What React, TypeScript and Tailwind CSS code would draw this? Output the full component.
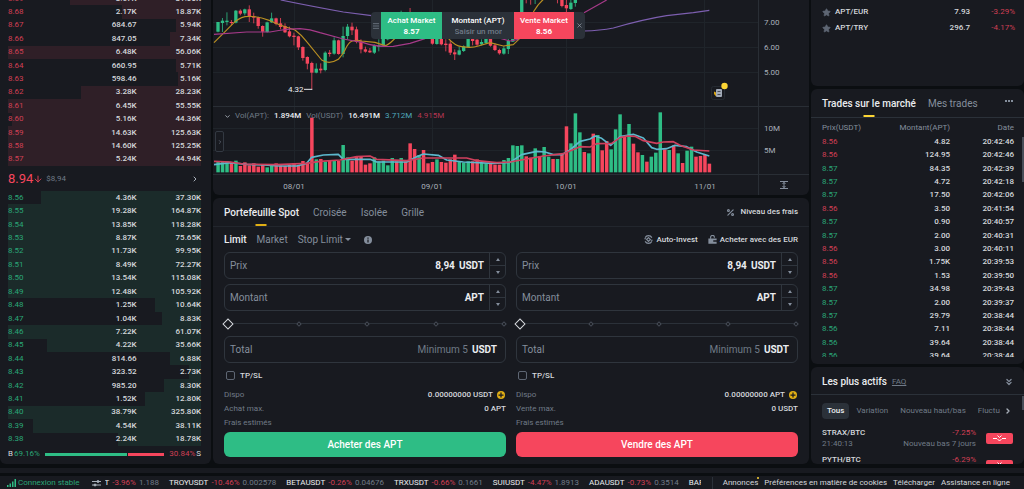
import { useState } from "react";
import { ArrowDown, ChevronDown, ChevronRight, ChevronsDown, Menu, Percent, Star, X } from "lucide-react";

const ASKS: [string, string, string, number][] = [
  ["8.69", "3.57K", "31.00K", 68],
  ["8.68", "2.17K", "18.87K", 41],
  ["8.67", "684.67", "5.94K", 13],
  ["8.66", "847.05", "7.34K", 16],
  ["8.65", "6.48K", "56.06K", 100],
  ["8.64", "660.95", "5.71K", 13],
  ["8.63", "598.46", "5.16K", 12],
  ["8.62", "3.28K", "28.23K", 62],
  ["8.61", "6.45K", "55.55K", 100],
  ["8.60", "5.16K", "44.36K", 98],
  ["8.59", "14.63K", "125.63K", 100],
  ["8.58", "14.60K", "125.25K", 100],
  ["8.57", "5.24K", "44.94K", 100],
];

const BIDS: [string, string, string, number][] = [
  ["8.56", "4.36K", "37.30K", 83],
  ["8.55", "19.28K", "164.87K", 100],
  ["8.54", "13.85K", "118.28K", 100],
  ["8.53", "8.87K", "75.65K", 100],
  ["8.52", "11.73K", "99.95K", 100],
  ["8.51", "8.49K", "72.27K", 100],
  ["8.50", "13.54K", "115.08K", 100],
  ["8.49", "12.48K", "105.92K", 100],
  ["8.48", "1.25K", "10.64K", 24],
  ["8.47", "1.04K", "8.83K", 20],
  ["8.46", "7.22K", "61.07K", 100],
  ["8.45", "4.22K", "35.66K", 80],
  ["8.44", "814.66", "6.88K", 16],
  ["8.43", "323.52", "2.73K", 6],
  ["8.42", "985.20", "8.30K", 19],
  ["8.41", "1.52K", "12.80K", 29],
  ["8.40", "38.79K", "325.80K", 100],
  ["8.39", "4.54K", "38.11K", 87],
  ["8.38", "2.24K", "18.78K", 43],
];

// price, amount, time, bought
const TRADES: [string, string, string, boolean][] = [
  ["8.56", "4.82", "20:42:46", false],
  ["8.56", "124.95", "20:42:46", false],
  ["8.57", "84.35", "20:42:39", true],
  ["8.57", "4.72", "20:42:18", true],
  ["8.57", "17.50", "20:42:06", true],
  ["8.56", "3.50", "20:41:54", false],
  ["8.57", "0.90", "20:40:57", true],
  ["8.57", "2.00", "20:40:31", true],
  ["8.56", "3.00", "20:40:11", false],
  ["8.56", "1.75K", "20:39:53", false],
  ["8.56", "1.53", "20:39:50", false],
  ["8.57", "34.98", "20:39:43", true],
  ["8.57", "2.00", "20:39:37", true],
  ["8.57", "29.79", "20:38:44", true],
  ["8.56", "7.11", "20:38:44", true],
  ["8.56", "39.64", "20:38:44", true],
  ["8.56", "39.64", "20:38:44", true],
];

const TICKERS = [
  ["T", "-3.96%", "1.188"],
  ["TROYUSDT", "-10.46%", "0.002578"],
  ["BETAUSDT", "-0.26%", "0.04676"],
  ["TRXUSDT", "-0.66%", "0.1661"],
  ["SUIUSDT", "-4.47%", "1.8913"],
  ["ADAUSDT", "-0.73%", "0.3514"],
  ["BAR"],
];

const GREEN = "#2ebd85";
const RED = "#f6465d";

// index, rising, body top, body bottom, high, low (thirds of a pixel)
const CANDLES: [number, 0 | 1, number, number, number, number][] = [
  [0, 1, 66, 95, 66, 97], [1, 1, 62, 69, 54, 96], [2, 1, 62, 66, 37, 76], [3, 0, 66, 69, 60, 76],
  [4, 1, 32, 68, 30, 70], [5, 0, 32, 41, 28, 46], [6, 1, 28, 40, 26, 46], [7, 0, 28, 50, 16, 66],
  [8, 0, 49, 53, 38, 70], [9, 0, 52, 78, 50, 86], [10, 0, 78, 95, 76, 110], [11, 1, 67, 96, 65, 98],
  [12, 1, 55, 67, 38, 69], [13, 0, 55, 72, 53, 76], [14, 0, 70, 81, 54, 88], [15, 0, 78, 97, 70, 99],
  [16, 0, 94, 109, 80, 112], [17, 0, 107, 111, 98, 136], [18, 0, 109, 142, 107, 150],
  [19, 0, 141, 174, 139, 182], [20, 0, 171, 191, 169, 208], [21, 0, 189, 218, 185, 268],
  [22, 1, 206, 218, 190, 220], [23, 0, 206, 211, 190, 220], [24, 1, 158, 210, 154, 214],
  [25, 0, 158, 162, 150, 170], [26, 1, 121, 161, 112, 164], [27, 0, 121, 162, 119, 164],
  [28, 1, 108, 162, 80, 172], [29, 1, 80, 108, 72, 118], [30, 0, 80, 91, 68, 105],
  [31, 0, 88, 126, 80, 130], [32, 0, 124, 148, 118, 160], [33, 0, 148, 155, 140, 158],
  [34, 0, 152, 157, 144, 159], [35, 1, 137, 158, 133, 162], [36, 1, 136, 140, 118, 154],
  [37, 1, 110, 137, 100, 138], [38, 1, 90, 118, 80, 121], [41, 1, 45, 60, 32, 70], [43, 0, 45, 60, 24, 70],
  [48, 0, 100, 131, 95, 134], [49, 1, 110, 132, 100, 134], [50, 0, 110, 133, 100, 136],
  [51, 0, 131, 135, 118, 154], [52, 0, 131, 158, 120, 165], [53, 0, 157, 163, 148, 180],
  [54, 1, 151, 164, 140, 166], [55, 1, 139, 153, 136, 156], [56, 1, 110, 141, 100, 142],
  [57, 0, 110, 123, 100, 136], [58, 0, 119, 134, 110, 138], [59, 1, 126, 133, 118, 136],
  [60, 1, 112, 129, 105, 131], [61, 0, 112, 137, 105, 140], [62, 0, 136, 150, 130, 153],
  [63, 0, 150, 160, 146, 164], [64, 1, 145, 161, 138, 164], [65, 1, 123, 147, 115, 162],
  [66, 1, 100, 125, 95, 126], [68, 1, -10, 37, -20, 40], [69, 0, -20, -10, -20, 10],
  [70, 0, -20, -10, -20, 14], [71, 1, -20, -10, -20, 12], [76, 0, -20, -10, -20, 10],
  [77, 0, -10, 18, -20, 22], [78, 0, 15, 25, -5, 38], [79, 1, 8, 27, 0, 30], [80, 1, -10, 9, -20, 20],
];

// bar heights in thirds of a pixel, negative for falling days
const VOLUMES = [
  31, 33, 33, -31, 35, -19, -30, -21, -27, -17, -24, 15, 22, -27, -21, -19, -22, -28, -22, -34, -29, -164,
  39, -40, 32, -34, 37, -34, 82, 45, -35, -49, -47, -23, -27, 45, 33, 35, 21, 43, -33, 43, -33, -87,
  -70, 52, -67, -27, -31, 39, -31, -29, -39, -53, 33, 29, 33, -33, -39, 29, 27, -25, -23, -23, 37, 43,
  81, 79, 81, -48, -44, 72, -49, 76, 47, -40, 40, -54, -138, 87, 177, 120, -61, 57, -116, 112, -66, -94,
  69, 129, 174, -107, 145, -86, -60, 52, -32, 47, 59, 180, -69, 67, -81, 57, -28, 65, 77, -47, -49, -52, -26,
];

const barX = (i: number) => 24 + i * 13.4;

function Chart() {
  return (
    <svg viewBox="0 0 596 195" preserveAspectRatio="xMaxYMin meet" className="block h-full w-full">
      <g stroke="#1f242a" strokeWidth="1" shapeRendering="crispEdges">
        <path d="M0 22.5H545M0 47.5H545M0 72.5H545M0 128.5H545M0 150.5H545M81.5 0V174M219.5 0V174M353.5 0V174M491.5 0V174" />
        <path d="M0 106.5H596M0 174.5H596M545.5 0V195" stroke="#292e35" />
      </g>
      <g transform="translate(-3 0) scale(.33333)">
        {CANDLES.map(([i, up, top, bottom, high, low]) => (
          <g key={i} fill={up ? GREEN : RED}>
            <rect x={barX(i) - 1.5} y={high} width="3" height={low - high} opacity=".8" />
            <rect x={barX(i) - 5} y={top} width="10" height={Math.max(bottom - top, 3)} />
          </g>
        ))}
        {VOLUMES.map((v, i) => (
          <rect key={i} x={barX(i) - 5} y={517 - Math.abs(v)} width="10.5" height={Math.abs(v)} fill={v > 0 ? GREEN : RED} />
        ))}
        <g fill="none" strokeWidth="3" strokeLinejoin="round">
          <path stroke="#b98f22" strokeWidth="3.5" d="M12 128L40 100L75 65Q95 49 115 49Q145 48 180 62L210 75L255 90Q275 105 290 125L335 180Q358 195 385 178Q400 160 405 150Q415 128 425 124Q440 118 455 123L495 127L525 137Q535 135 550 120L590 80M690 90L712 112Q735 138 755 140Q785 145 805 138L840 128L880 138L910 134L935 110M970 36Q985 10 1003 -4" />
          <path stroke="#a63a89" strokeWidth="3.5" d="M12 103L110 96L180 96Q235 86 270 86Q300 88 330 98L400 117L460 128Q500 142 550 139L600 130L645 116M860 112L900 123L925 118M1122 38L1190 0" />
          <path stroke="#7d5fb0" strokeWidth="3.5" d="M212 0Q320 22 400 36L485 47M1122 93Q1170 92 1210 84Q1300 58 1370 47L1450 38L1498 31" />
          <path stroke="#5cb8cd" strokeWidth="5" d="M12 494L60 488L110 493L160 495L210 498L260 498L290 490L305 472L340 465L385 463L400 478L480 478L500 486L590 486L620 470L640 462L685 466L710 480L760 486L850 490L900 487L935 464L980 454L1005 456L1030 464L1055 464L1080 450L1110 424L1140 417L1155 408L1175 415L1202 436L1230 410L1270 403L1300 414L1325 443L1340 448L1370 446L1395 436L1430 440L1460 456L1498 468" />
          <path stroke="#cf405d" strokeWidth="5" d="M12 484L60 486L100 492L200 494L290 490L330 484L390 480L440 470L480 468L500 478L590 482L640 474L770 474L800 482L860 488L900 486L1000 468L1060 461L1110 440L1140 441L1160 431L1205 430L1230 413L1250 408L1275 409L1300 422L1340 430L1360 426L1390 425L1410 436L1450 450L1498 453" />
        </g>
        <path d="M282 268H307" stroke="#eaecef" strokeWidth="3" />
      </g>
      <g fill="#a9b0ba" fontSize="8">
        <text x="75" y="92" fill="#eaecef">4.32</text>
        <text x="551" y="25">7.00</text>
        <text x="551" y="50">6.00</text>
        <text x="551" y="75">5.00</text>
        <text x="551" y="131">10M</text>
        <text x="551" y="153">5M</text>
        <g textAnchor="middle">
          <text x="81" y="189">08/01</text>
          <text x="219" y="189">09/01</text>
          <text x="353" y="189">10/01</text>
          <text x="492" y="189">11/01</text>
        </g>
      </g>
      <path d="M567 181.5H575M567 188.5H575M571 182V188M569.5 184L571 182.5L572.5 184M569.5 186L571 187.5L572.5 186" stroke="#848e9c" fill="none" />
      <rect x="498.5" y="86.5" width="13" height="13" rx="2" fill="#181a20" stroke="#252a31" />
      <path d="M501 91.5L503 92.5V96.5L501 94Z" fill="#d9a514" />
      <rect x="503" y="89" width="6" height="8" rx="1" fill="#a3abb8" />
      <path d="M504.5 91.5H507.5M504.5 94.5H507.5" stroke="#474d57" />
      <circle cx="511.5" cy="86" r="3.2" fill="#fcd535" />
    </svg>
  );
}

function QuickOrder() {
  return (
    <div className="absolute left-[158px] top-3 flex h-[27px] overflow-hidden rounded-sm bg-[#2b3139] text-[8px] font-medium leading-[11px] text-white">
      <div className="flex w-[10px] items-center justify-center text-[#848e9c]"><Menu size={8} /></div>
      <button className="w-[61px] bg-[#2ebd85]">Achat Market<br /><b>8.57</b></button>
      <label className="flex w-[72px] flex-col items-center justify-center">
        Montant (APT)
        <input placeholder="Saisir un montant" className="w-[47px] bg-transparent placeholder:text-[#707a87] outline-none" />
      </label>
      <button className="w-[60px] bg-[#f6465d]">Vente Market<br /><b>8.56</b></button>
      <button aria-label="Fermer" className="flex w-[11px] items-center justify-center text-[#a9b0ba]"><X size={7} /></button>
    </div>
  );
}

function BookTable({ rows, side }: { rows: [string, string, string, number][]; side: "ask" | "bid" }) {
  return (
    <table className={"block px-2 font-medium " + (side === "ask" ? "h-[174px] shrink-0" : "min-h-0 flex-1")}>
      <tbody className="flex h-full flex-col">
        {rows.map(([price, amount, total, depth]) => (
          <tr key={price} className="relative grid flex-1 grid-cols-3 items-center text-right">
            <td className={"text-left font-normal " + (side === "ask" ? "text-[#d03f54]" : "text-[#2aa677]")}>
              <span
                className={"absolute inset-y-0 right-0 " + (side === "ask" ? "bg-[#2f1f27]" : "bg-[#1b2b2a]")}
                style={{ width: `${depth}%` }}
              />
              <span className="relative">{price}</span>
            </td>
            <td className="relative">{amount}</td>
            <td className="relative">{total}</td>
          </tr>
        ))}
      </tbody>
    </table>
  );
}

function OrderBook() {
  return (
    <section className="flex w-[211px] shrink-0 flex-col rounded-b-md bg-[#181a20] pr-[2px]">
      <div className="flex h-[166px] flex-col justify-end overflow-hidden">
        <BookTable rows={ASKS} side="ask" />
      </div>
      <div className="flex h-[25px] items-center px-2">
        <span className="text-[13px] text-[#f6465d]">8.94</span>
        <ArrowDown size={10} className="text-[#f6465d]" />
        <span className="ml-[3px] text-[#707a87]">$8,94</span>
        <ChevronRight size={8} strokeWidth={3} className="ml-auto mr-[2px] text-[#a9b0ba]" />
      </div>
      <BookTable rows={BIDS} side="bid" />
      <div className="flex h-[18px] items-center px-2 pb-[2px]">
        <span>B</span>
        <span className="ml-px text-[#2aa677]">69.16%</span>
        <div className="mx-[5px] flex flex-1 gap-px">
          <span className="h-[3px] grow-[69] bg-[#2ebd85]" />
          <span className="h-[3px] grow-[31] bg-[#f6465d]" />
        </div>
        <span className="text-[#d03f54]">30.84%</span>
        <span className="ml-px">S</span>
      </div>
    </section>
  );
}

function Spinner() {
  return (
    <div className="flex h-full w-4 flex-col divide-y divide-[#2f353d] border-l border-[#2f353d]">
      <button aria-label="Augmenter" className="flex flex-1 items-center justify-center">
        <span className="border-x-2 border-b-[3px] border-x-transparent border-b-[#848e9c]" />
      </button>
      <button aria-label="Diminuer" className="flex flex-1 items-center justify-center">
        <span className="border-x-2 border-t-[3px] border-x-transparent border-t-[#848e9c]" />
      </button>
    </div>
  );
}

function Field({ label, unit, value, placeholder, stepper }: { label: string; unit: string; value?: string; placeholder?: string; stepper?: boolean }) {
  return (
    <div className="flex h-[27px] items-center overflow-hidden rounded-md border border-[#2f353d] text-[10px]">
      <label className="flex min-w-0 flex-1 items-center pl-[5px] text-[#848e9c]">
        {label}
        <input
          defaultValue={value}
          placeholder={placeholder}
          className="min-w-0 flex-1 bg-transparent text-right font-bold text-[#eaecef] outline-none placeholder:font-normal placeholder:text-[#707a87]"
        />
      </label>
      <span className={"pl-1 font-bold text-[#eaecef] " + (stepper ? "pr-[5px]" : "pr-2")}>{unit}</span>
      {stepper && <Spinner />}
    </div>
  );
}

function OrderForm({ side }: { side: "buy" | "sell" }) {
  const [amount, setAmount] = useState(0);
  const buy = side === "buy";

  return (
    <form className="min-w-0 flex-1" onSubmit={(e) => e.preventDefault()}>
      <div className="flex flex-col gap-[5px]">
        <Field label="Prix" unit="USDT" value="8,94" stepper />
        <Field label="Montant" unit="APT" stepper />
      </div>
      <div className="relative flex h-[25px] items-center justify-between">
        <span className="absolute inset-x-1 h-px bg-[#2b3139]" />
        {[0, 25, 50, 75, 100].map((step) => (
          <span
            key={step}
            className={"relative rotate-45 border bg-[#181a20] " + (step === 0 ? "size-2 border-[#d5d8dc]" : "size-1 border-[#474d57]")}
          />
        ))}
        <input
          type="range"
          aria-label="Pourcentage"
          value={amount}
          onChange={(e) => setAmount(Number(e.target.value))}
          className="absolute inset-0 w-full opacity-0"
        />
      </div>
      <Field label="Total" unit="USDT" placeholder="Minimum 5" />
      <label className="flex h-[25px] items-center gap-[5px] pl-[2px] font-medium text-[#d5d8dc]">
        <input type="checkbox" className="size-[9px] appearance-none rounded-xs border border-[#5e6673]" />
        TP/SL
      </label>
      <dl className="leading-[14px] text-[#707a87]">
        <div className="flex justify-between">
          <dt>Dispo</dt>
          <dd className="flex items-center gap-1 font-medium text-[#d5d8dc]">
            0.00000000 {buy ? "USDT" : "APT"}
            <svg viewBox="0 0 16 16" className="mr-px size-2">
              <circle cx="8" cy="8" r="8" fill="#e0ae14" />
              <path d="M8 3V13M3 8H13" stroke="#181a20" strokeWidth="2.5" />
            </svg>
          </dd>
        </div>
        <div className="flex justify-between">
          <dt>{buy ? "Achat max." : "Vente max."}</dt>
          <dd className="font-medium text-[#d5d8dc]">{buy ? "0 APT" : "0 USDT"}</dd>
        </div>
        <div><dt>Frais estimés</dt></div>
      </dl>
      <button className={"mt-[2px] h-[25px] w-full rounded-md text-[10px] font-medium text-white " + (buy ? "bg-[#2ebd85]" : "bg-[#f6465d]")}>
        {buy ? "Acheter des APT" : "Vendre des APT"}
      </button>
    </form>
  );
}

function TradePanel() {
  return (
    <section className="rounded-md bg-[#181a20]">
      <div className="flex h-[29px] items-center gap-[14px] border-b border-[#22262d] px-[11px] text-[10px] text-[#848e9c]">
        <button className="relative h-full font-medium text-[#eaecef]">
          Portefeuille Spot
          <span className="absolute bottom-0 left-1/2 h-[2px] w-[11px] -translate-x-1/2 bg-[#e0ae14]" />
        </button>
        <button>Croisée</button>
        <button>Isolée</button>
        <button>Grille</button>
        <a href="#" className="ml-auto flex items-center gap-[5px] text-[8px] font-medium text-[#d5d8dc]">
          <Percent size={9} strokeWidth={3} className="text-[#848e9c]" />
          Niveau des frais
        </a>
      </div>
      <div className="flex h-[25px] items-center gap-[10px] px-[11px] text-[10px] text-[#848e9c]">
        <button className="font-medium text-[#eaecef]">Limit</button>
        <button>Market</button>
        <button className="flex items-center gap-[2px]">
          Stop Limit
          <span className="border-x-[3px] border-t-[3px] border-x-transparent border-t-[#848e9c]" />
        </button>
        <svg viewBox="0 0 16 16" className="ml-[3px] size-2">
          <circle cx="8" cy="8" r="8" fill="#848e9c" />
          <path d="M8 3V5.5M8 7V13" stroke="#181a20" strokeWidth="2.5" />
        </svg>
        <a href="#" className="ml-auto flex items-center gap-[3px] text-[8px] font-medium text-[#d5d8dc]">
          <svg viewBox="0 0 24 24" fill="none" stroke="#848e9c" strokeWidth="3" className="size-[9px]">
            <path d="M3 7C7 0 17 0 21 7M21 17C17 24 7 24 3 17M1 10H6M18 14H23" />
            <path d="M12 7L17 12L12 17L7 12Z" />
          </svg>
          Auto-Invest
        </a>
        <a href="#" className="flex items-center gap-[3px] text-[8px] font-medium text-[#d5d8dc]">
          <svg viewBox="0 0 24 24" className="size-[9px]">
            <path d="M7 10V6A5 5 0 0 1 17 6V7" fill="none" stroke="#848e9c" strokeWidth="3" />
            <path d="M1 9H23V14H14V18H23V23H1Z" fill="#848e9c" />
          </svg>
          Acheter avec des EUR
        </a>
      </div>
      <div className="flex gap-[10px] px-[11px] pb-[7px]">
        <OrderForm side="buy" />
        <OrderForm side="sell" />
      </div>
    </section>
  );
}

function ChartPanel() {
  return (
    <section className="relative min-h-0 flex-1 overflow-hidden rounded-b-md bg-[#181a20]">
      <Chart />
      <div className="absolute left-[11px] top-[110px] flex items-center gap-[5px] leading-3 text-[#707a87]">
        <ChevronDown size={7} strokeWidth={3} className="-mr-px text-[#a9b0ba]" />
        <span>Vol(APT):</span>
        <span className="font-medium text-[#eaecef]">1.894M</span>
        <span>Vol(USDT)</span>
        <span className="font-medium text-[#eaecef]">16.491M</span>
        <span className="text-[#4fa8bd]">3.712M</span>
        <span className="text-[#b53652]">4.915M</span>
      </div>
      <button aria-label="Outils" className="absolute left-[2px] top-[131px] flex h-[21px] w-[9px] items-center justify-center rounded-xs border border-[#333942] bg-[#181a20] text-[#848e9c]">
        <ChevronRight size={6} />
      </button>
      <QuickOrder />
    </section>
  );
}

function MarketTrades() {
  return (
    <section className="relative flex min-h-0 flex-1 flex-col rounded-md bg-[#181a20] pb-[7px]">
      <div className="flex h-[29px] shrink-0 items-center gap-3 border-b border-[#2b3139] px-[11px] text-[10px]">
        <button className="relative h-full font-medium text-[#eaecef]">
          Trades sur le marché
          <span className="absolute bottom-0 left-1/2 h-[2px] w-[11px] -translate-x-1/2 bg-[#fcd535]" />
        </button>
        <button className="text-[#848e9c]">Mes trades</button>
        <button aria-label="Plus" className="ml-auto flex gap-px pb-1">
          <span className="size-[2px] bg-[#848e9c]" />
          <span className="size-[2px] bg-[#848e9c]" />
          <span className="size-[2px] bg-[#848e9c]" />
        </button>
      </div>
      <table className="flex min-h-0 flex-1 flex-col overflow-hidden pl-[11px] pr-[10px]">
        <thead className="block shrink-0 text-[#848e9c]">
          <tr className="grid h-[17px] grid-cols-3 items-end pb-px text-right *:font-normal">
            <th className="text-left">Prix(USDT)</th>
            <th>Montant(APT)</th>
            <th>Date</th>
          </tr>
        </thead>
        <tbody className="flex h-[228px] shrink-0 flex-col font-medium">
          {TRADES.map(([price, amount, time, bought], i) => (
            <tr key={i} className="grid flex-1 grid-cols-3 items-center text-right">
              <td className={"text-left font-normal " + (bought ? "text-[#2aa677]" : "text-[#d03f54]")}>{price}</td>
              <td>{amount}</td>
              <td>{time}</td>
            </tr>
          ))}
        </tbody>
      </table>
      <span className="absolute right-0 top-12 h-[45px] w-[2px] bg-[#474d57]" />
    </section>
  );
}

function TopMovers() {
  return (
    <section className="relative h-[97px] shrink-0 overflow-hidden rounded-md bg-[#181a20]">
      <div className="flex h-7 items-center gap-[5px] border-b border-[#2b3139] px-[11px] pt-[2px]">
        <h2 className="text-[10px] font-medium text-[#eaecef]">Les plus actifs</h2>
        <a href="#" className="text-[#707a87] underline">FAQ</a>
        <ChevronsDown size={10} strokeWidth={3} className="ml-auto -mr-px text-[#848e9c]" />
      </div>
      <div className="flex h-8 items-center gap-3 overflow-hidden whitespace-nowrap pl-[11px] pr-3 text-[#707a87]">
        <button className="-mr-[5px] h-4 rounded-sm bg-[#2b3139] px-[5px] font-medium text-[#eaecef]">Tous</button>
        <button>Variation</button>
        <button>Nouveau haut/bas</button>
        <button className="min-w-0 flex-1 overflow-hidden text-left">Fluctuation</button>
        <ChevronRight size={8} strokeWidth={4} className="-ml-2 shrink-0 text-[#a9b0ba]" />
      </div>
      {[
        ["STRAX/BTC", "-7.25%", "21:40:13"],
        ["PYTH/BTC", "-6.29%", "21:39:58"],
      ].map(([pair, change, time]) => (
        <div key={pair} className="mb-[5px] flex items-center px-[11px] leading-[11px]">
          <div className="flex-1 text-[#707a87]">
            <p className="font-medium text-[#d5d8dc]">{pair}</p>
            <p>{time}</p>
          </div>
          <div className="text-right text-[#707a87]">
            <p className="text-[#d03f54]">{change}</p>
            <p>Nouveau bas 7 jours</p>
          </div>
          <svg viewBox="0 0 27 11" className="ml-[10px] h-[11px] w-[27px]">
            <rect width="27" height="11" rx="2" fill={RED} />
            <path d="M7 5.5H11M16 5.5H20" stroke="#fff" />
            <path d="M11.5 2.5L13.5 4.5L15.5 2.5M11.5 6L13.5 8L15.500 6" stroke="#fff" fill="none" />
          </svg>
        </div>
      ))}
      <span className="absolute right-0 top-[29px] h-[14px] w-[2px] bg-[#474d57]" />
    </section>
  );
}

function Pairs() {
  return (
    <section className="h-[86px] shrink-0 rounded-b-md bg-[#181a20] pt-1">
      {[
        ["APT/EUR", "7.93", "-3.29%"],
        ["APT/TRY", "296.7", "-4.17%"],
      ].map(([pair, price, change]) => (
        <div key={pair} className="flex h-4 items-center pl-[11px] pr-[9px] font-medium">
          <Star size={9} fill="#5e6673" className="mr-1 text-[#5e6673]" />
          <span>{pair}</span>
          <span className="ml-auto">{price}</span>
          <span className="w-[45px] text-right font-normal text-[#d03f54]">{change}</span>
        </div>
      ))}
    </section>
  );
}

function Footer() {
  return (
    <footer className="mt-[3px] flex h-[13px] shrink-0 items-center whitespace-nowrap bg-[#181a20] pl-[7px] pr-[14px]">
      <svg viewBox="0 0 9 8" className="mr-[2px] h-2 w-[9px]" fill={GREEN}>
        <path d="M0 6H1.500V8H0ZM2.500 4.500H4V8H2.500ZM5 2.500H6.500V8H5ZM7.500 0H9V8H7.500Z" />
      </svg>
      <span className="text-[#2aa677]">Connexion stable</span>
      <svg viewBox="0 0 9 8" className="ml-3 mr-1 h-2 w-[9px]" stroke="#a9b0ba" fill="#a9b0ba">
        <path d="M0 2.500H9M0 6H9" />
        <circle cx="6" cy="2.500" r="1" />
        <circle cx="3" cy="6" r="1" />
      </svg>
      <div className="flex min-w-0 flex-1 gap-[10px] overflow-hidden">
        {TICKERS.map(([pair, change, price]) => (
          <span key={pair} className="flex gap-[3px]">
            <span className="text-[#eaecef]">{pair}</span>
            {change && <span className="text-[#d03f54]">{change}</span>}
            {price && <span className="text-[#707a87]">{price}</span>}
          </span>
        ))}
      </div>
      <nav className="ml-[11px] flex gap-[6px] border-l border-[#2b3139] pl-[10px] text-[#d5d8dc]">
        <a href="#" className="relative">
          Annonces
          <span className="absolute -right-px top-0 size-[2px] rounded-full bg-[#fcd535]" />
        </a>
        <a href="#">Préférences en matière de cookies</a>
        <a href="#">Télécharger</a>
        <a href="#">Assistance en ligne</a>
      </nav>
    </footer>
  );
}

export default function App() {
  return (
    <div className="flex h-screen flex-col overflow-hidden bg-[#0b0e11] font-[Roboto,sans-serif] text-[8px] text-[#d5d8dc]">
      <main className="flex min-h-0 flex-1 gap-[2px]">
        <OrderBook />
        <div className="flex min-w-0 flex-1 flex-col gap-[3px]">
          <ChartPanel />
          <TradePanel />
        </div>
        <aside className="flex w-[213px] shrink-0 flex-col gap-[3px]">
          <Pairs />
          <MarketTrades />
          <TopMovers />
        </aside>
      </main>
      <div className="mt-1 h-[5px] shrink-0 bg-[#181a20]" />
      <Footer />
    </div>
  );
}
